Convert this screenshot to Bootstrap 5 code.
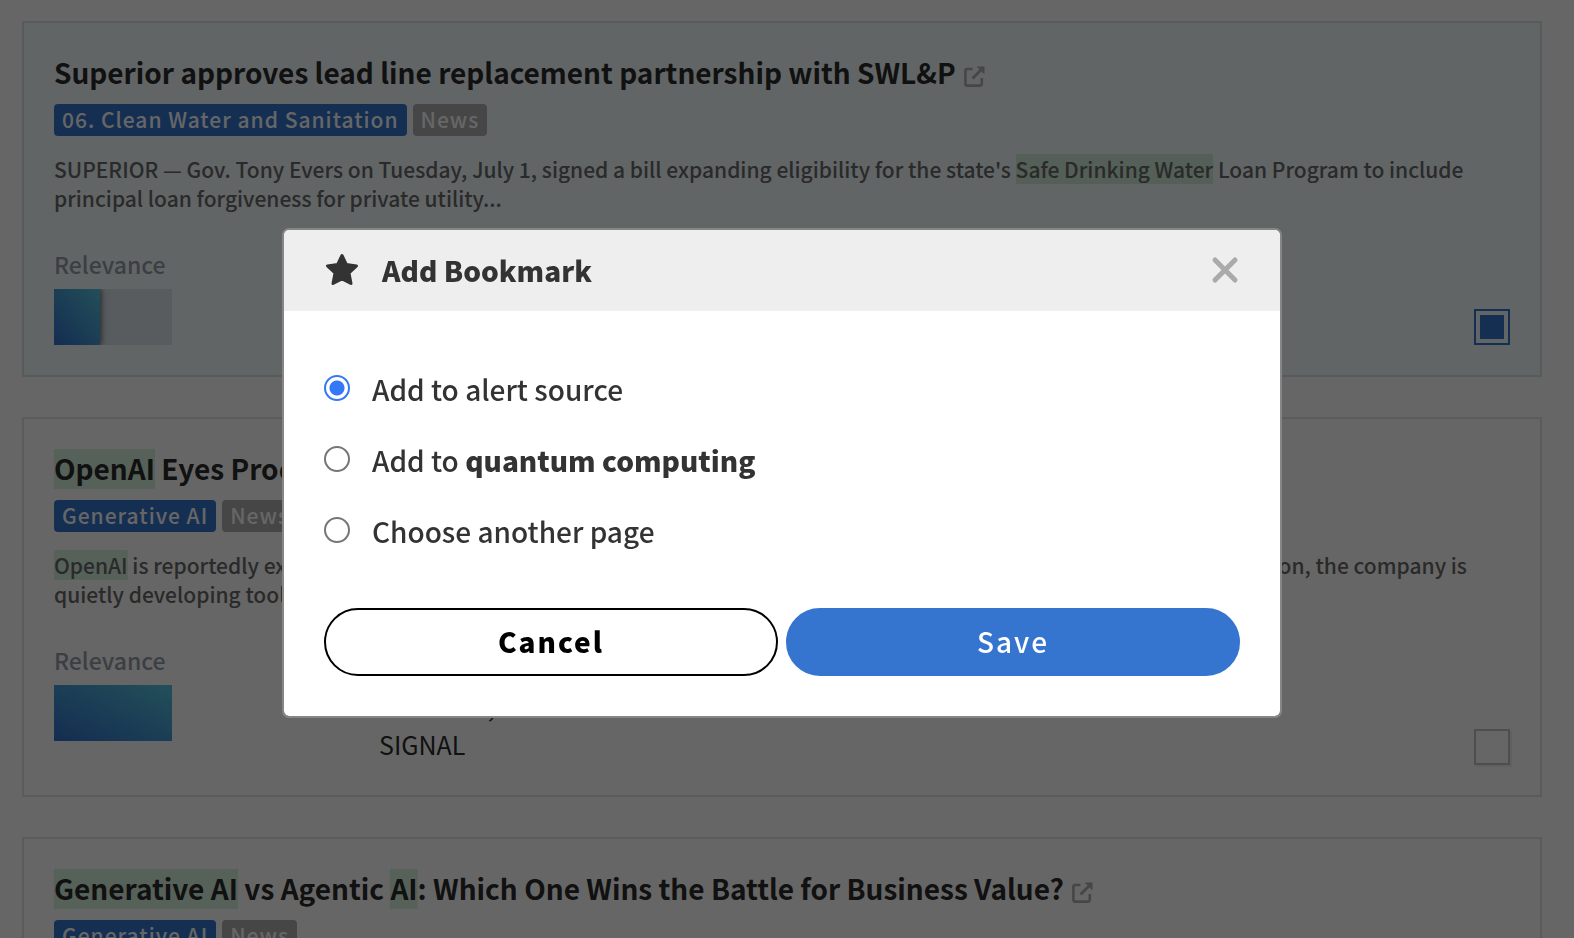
<!DOCTYPE html>
<html lang="en">
<head>
<meta charset="utf-8">
<meta name="viewport" content="width=device-width, initial-scale=1">
<title>Add Bookmark</title>
<link href="https://cdn.jsdelivr.net/npm/bootstrap@5.3.0/dist/css/bootstrap.min.css" rel="stylesheet">
<style>
  :root { --brand: #3575d0; --hit: #d8f2de; }
  body {
    font-family: "Source Sans Pro", "Noto Sans CJK SC", sans-serif;
    color: #2b2b2b;
    background: #fff;
  }
  .feed { padding: 21px 32px 40px 22px; gap: 40px; }
  .article { border: 2px solid #e3e3e3; padding: 30px; }
  .article.selected { --hit: #d0eeda; background: #f3fcff; border-color: #dde3e4; }
  .article h2 { font-size: 28px; line-height: 38px; font-weight: 600; margin: 0 0 13px; }
  .article h2 a { color: inherit; }
  .article h2 svg { width: 21px; height: 21px; margin-left: 8px; color: #b0b0b0; vertical-align: -3px; }
  .tags { gap: 6px; }
  .tag {
    font-size: 21px; line-height: 30px; font-weight: 500; letter-spacing: 1px;
    padding: 0 8px 2px; border-radius: 4px; color: #fff; background: #b0b0b0;
  }
  .tag-topic { background: var(--brand); }
  .summary { font-size: 21px; line-height: 29px; font-weight: 500; color: #696969; margin: 19px 0 0; }
  .hit { background: linear-gradient(var(--hit), var(--hit)) bottom / 100% 31px no-repeat; }
  h2 .hit { padding-bottom: 1px; background-size: 100% 40px; }
  .article-foot { margin-top: 34px; }
  .article-foot.tall { min-height: 122px; }
  .relevance { width: 325px; font-size: 23px; line-height: 34px; font-weight: 500; color: #949da8; }
  .meter { width: 118px; height: 56px; margin-top: 8px; background: #dbe5ec; overflow: hidden; }
  .meter-fill { height: 100%; background: linear-gradient(to top right, #3370cc, #58c6de); box-shadow: 1px 0 6px #555; }
  .meta { font-size: 25px; line-height: 38px; padding-bottom: 2px; }
  .pick {
    appearance: none; width: 36px; height: 36px; margin: 0;
    border: 2px solid #c4c4c4; background: #fff; box-shadow: 2px 2px 0 #f0f0f0;
  }
  .pick:checked { padding: 4px; border-color: var(--brand); background: var(--brand) content-box; box-shadow: none; }

  .modal-backdrop.show { opacity: .6; }
  .modal { padding-right: 10px; }
  .modal-dialog { max-width: 1000px; margin: 228px auto 0; }
  .modal-content { border: 2px solid #868686; border-radius: 7px; background-clip: padding-box; overflow: hidden; color: #333; }
  .modal-header { background: #eee; border: 0; border-radius: 0; padding: 19px 40px 19px 41px; }
  .modal-title { font-size: 28px; line-height: 43px; font-weight: 900; }
  .star { width: 34px; height: 34px; margin: 0 23px 2px 0; }
  .dismiss { border: 0; background: none; padding: 0 0 2px; color: #aaa; line-height: 0; }
  .modal-body { padding: 58px 40px 40px; font-size: 28px; font-weight: 500; }
  .choice { gap: 22px; line-height: 41px; margin-bottom: 30px; }
  .choice input {
    appearance: none; width: 26px; height: 26px; margin: 0 0 4px; flex: none;
    border: 2px solid #767676; border-radius: 50%; background: #fff;
  }
  .choice input:checked { border-color: #3478f6; background: radial-gradient(circle, #3478f6 7px, #fff 8px); }
  .choice b { font-weight: 900; }
  .actions { gap: 8px; margin-top: 56px; }
  .actions .btn { font-size: 28px; line-height: 44px; font-weight: 500; padding: 9px 10px 11px; border: 2px solid #000; border-radius: 34px; letter-spacing: 2px; }
  .actions .btn-stop { color: #000; font-weight: 900; background: #fff; }
  .actions .btn-go { color: #fff; background: var(--brand); border-color: var(--brand); }
</style>
</head>
<body class="modal-open overflow-hidden">

<svg class="d-none" xmlns="http://www.w3.org/2000/svg">
  <symbol id="external" viewBox="0 0 21 21">
    <path d="M8.500 3H3.200a1.800 1.800 0 0 0-1.800 1.800V17.800A1.800 1.800 0 0 0 3.200 19.600H16A1.800 1.800 0 0 0 17.800 17.800V12" fill="none" stroke="currentColor" stroke-width="2.600"/>
    <path d="M8.500 12.500 17 4" fill="none" stroke="currentColor" stroke-width="2.800"/>
    <path d="M12.500 .5H20.500V8.500Z" fill="currentColor"/>
  </symbol>
</svg>

<main class="feed d-flex flex-column">
  <article class="article selected">
    <h2>Superior approves lead line replacement partnership with SWL&amp;P<a href="#" aria-label="Open article"><svg><use href="#external"/></svg></a></h2>
    <div class="tags d-flex">
      <span class="tag tag-topic">06. Clean Water and Sanitation</span>
      <span class="tag">News</span>
    </div>
    <p class="summary">SUPERIOR — Gov. Tony Evers on Tuesday, July 1, signed a bill expanding eligibility for the state's <span class="hit">Safe Drinking Water</span> Loan Program to include principal loan forgiveness for private utility...</p>
    <div class="article-foot d-flex align-items-end">
      <div class="relevance me-auto">Relevance
        <div class="meter"><div class="meter-fill" style="width:39%"></div></div>
      </div>
      <input class="pick" type="checkbox" aria-label="Select article" checked>
    </div>
  </article>

  <article class="article">
    <h2><span class="hit">OpenAI</span> Eyes Productivity Suite<a href="#" aria-label="Open article"><svg><use href="#external"/></svg></a></h2>
    <div class="tags d-flex">
      <span class="tag tag-topic">Generative AI</span>
      <span class="tag">News</span>
    </div>
    <p class="summary"><span class="hit">OpenAI</span> is reportedly expanding beyond chat and into workplace software. According to a further report from The Information, the company is quietly developing tools...</p>
    <div class="article-foot tall d-flex">
      <div class="relevance">Relevance
        <div class="meter"><div class="meter-fill" style="width:100%"></div></div>
      </div>
      <div class="meta mt-auto me-auto">
        <div>New York, US</div>
        <div>SIGNAL</div>
      </div>
      <input class="pick align-self-end" type="checkbox" aria-label="Select article">
    </div>
  </article>

  <article class="article">
    <h2><span class="hit">Generative AI</span> vs Agentic <span class="hit">AI</span>: Which One Wins the Battle for Business Value?<a href="#" aria-label="Open article"><svg><use href="#external"/></svg></a></h2>
    <div class="tags d-flex">
      <span class="tag tag-topic">Generative AI</span>
      <span class="tag">News</span>
    </div>
  </article>
</main>

<div class="modal-backdrop show"></div>

<div class="modal d-block" tabindex="-1" role="dialog" aria-modal="true" aria-labelledby="bookmarkTitle">
  <div class="modal-dialog">
    <form class="modal-content">
      <div class="modal-header">
        <svg class="star" viewBox="0 0 34 34" aria-hidden="true"><path d="M17 2.500 21.300 11.500 31.500 12.900 24 20 26 30.500 17 25.800 8 30.500 10 20 2.500 12.900 12.700 11.500Z" fill="#333" stroke="#333" stroke-width="3" stroke-linejoin="round"/></svg>
        <h1 class="modal-title me-auto" id="bookmarkTitle">Add Bookmark</h1>
        <button class="dismiss" type="button" aria-label="Close"><svg width="30" height="30" viewBox="0 0 30 30"><path d="M5 5 25 25M25 5 5 25" stroke="currentColor" stroke-width="5" stroke-linecap="round"/></svg></button>
      </div>
      <div class="modal-body">
        <div class="choice d-flex align-items-center">
          <input type="radio" name="target" id="toAlert" checked><label for="toAlert">Add to alert source</label>
        </div>
        <div class="choice d-flex align-items-center">
          <input type="radio" name="target" id="toTopic"><label for="toTopic">Add to <b>quantum computing</b></label>
        </div>
        <div class="choice d-flex align-items-center mb-0">
          <input type="radio" name="target" id="toOther"><label for="toOther">Choose another page</label>
        </div>
        <div class="actions d-flex">
          <button class="btn btn-stop col" type="button">Cancel</button>
          <button class="btn btn-go col" type="submit">Save</button>
        </div>
      </div>
    </form>
  </div>
</div>

<script src="https://cdn.jsdelivr.net/npm/bootstrap@5.3.0/dist/js/bootstrap.bundle.min.js"></script>
</body>
</html>
